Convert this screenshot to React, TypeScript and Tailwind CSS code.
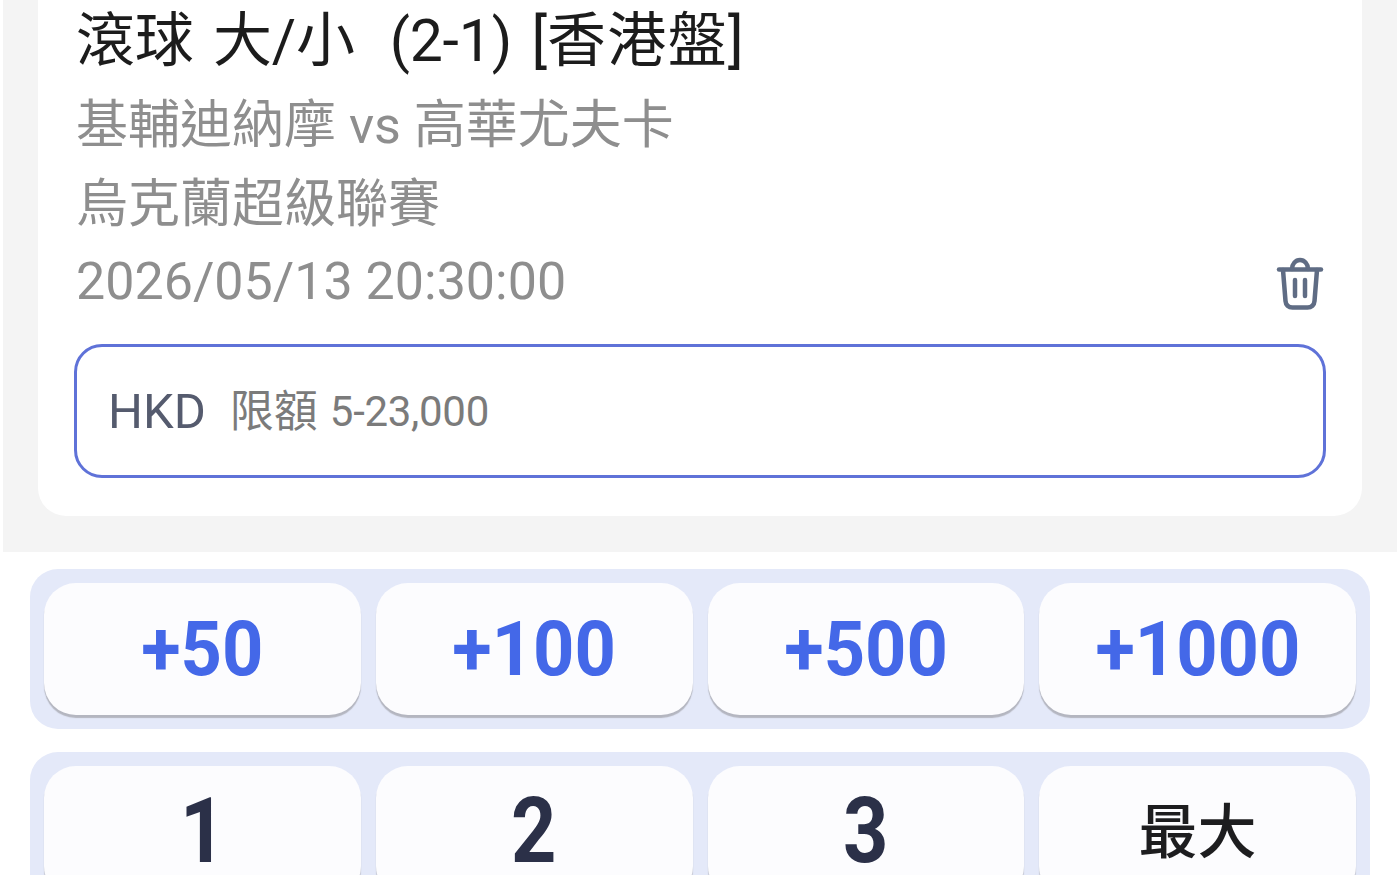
const cjk = '"Roboto", "Noto Sans CJK TC", sans-serif';

const quickAmounts = ['+50', '+100', '+500', '+1000'];
const numberKeys = ['1', '2', '3', '最大'];

function TrashIcon() {
  return (
    <svg width="48" height="54" viewBox="0 0 48 54" fill="none" stroke="#5f6c84" strokeWidth="4.5" strokeLinecap="round" strokeLinejoin="round" className="shrink-0">
      <path d="M3 12.5h42" />
      <path d="M16 12c0-5 3.5-9 8-9s8 4 8 9" />
      <path d="M7 13l2.5 31c.3 4 3 6.5 7 6.5h15c4 0 6.7-2.5 7-6.5L41 13" />
      <path d="M19 23v16M29 23v16" />
    </svg>
  );
}

function KeyLabel({ label, blue }: { label: string; blue?: boolean }) {
  if (label === '最大') {
    return <span className="text-[59px] font-medium leading-none text-[#1d1d1f]">{label}</span>;
  }
  if (blue) {
    return <span className="scale-x-[0.95] text-[76px] font-bold leading-none text-[#4468e8]">{label}</span>;
  }
  return <span className="scale-x-[0.88] text-[90px] font-bold leading-none text-[#2b3048]">{label}</span>;
}

function KeyRow({ keys, blue }: { keys: string[]; blue?: boolean }) {
  return (
    <div className="grid grid-cols-4 gap-[15px] rounded-[28px] bg-[#e4e9f9] p-[14px]">
      {keys.map((key) => (
        <button
          key={key}
          className="flex h-[132px] items-center justify-center rounded-[32px] bg-[#fcfcfe] shadow-[0_3px_1px_#b4b6c0]"
        >
          <KeyLabel label={key} blue={blue} />
        </button>
      ))}
    </div>
  );
}

export default function App() {
  return (
    <div className="h-[875px] w-[1400px] overflow-hidden bg-white" style={{ fontFamily: cjk }}>
      {/* Bet slip */}
      <div className="mx-[3px] h-[552px] bg-[#f4f4f4] px-[35px]">
        <div className="flex h-[516px] flex-col rounded-b-[28px] bg-white px-[38px]">
          <div className="mt-[8px] h-[66px] whitespace-pre text-[59px] leading-[66px] tracking-[-0.2px] text-[#1c1c1c] [word-spacing:5px]">
            滾球 大/小  <span className="-ml-[4px]">(2-1) [<span className="tracking-[1.4px]">香港盤</span>]</span>
          </div>
          <div className="mt-[26px] h-[52px] text-[52px] leading-[52px] text-[#8e8e8e]">基輔迪納摩 vs 高華尤夫卡</div>
          <div className="mt-[27px] h-[52px] text-[52px] leading-[52px] text-[#8e8e8e]">烏克蘭超級聯賽</div>
          <div className="mt-[25px] flex h-[52px] items-start justify-between">
            <span className="text-[52px] leading-[52px] text-[#8e8e8e]">2026/05/13 20:30:00</span>
            <div className="mt-[1px]">
              <TrashIcon />
            </div>
          </div>
          <div className="-mx-[2px] mt-[36px] flex h-[134px] items-center rounded-[28px] border-[3px] border-[#5f72d8] bg-white pl-[31px]">
            <span className="text-[49px] leading-none text-[#555b6e]">HKD</span>
            <span className="ml-[24px] mt-[2px] text-[44px] leading-none text-[#7b7b7b]">限額</span>
            <span className="ml-[12px] mt-[2px] text-[42px] leading-none tracking-[-0.3px] text-[#7b7b7b]">5-23,000</span>
          </div>
        </div>
      </div>

      {/* Keypad */}
      <div className="flex flex-col gap-[23px] px-[30px] pt-[17px]">
        <KeyRow keys={quickAmounts} blue />
        <KeyRow keys={numberKeys} />
      </div>
    </div>
  );
}
